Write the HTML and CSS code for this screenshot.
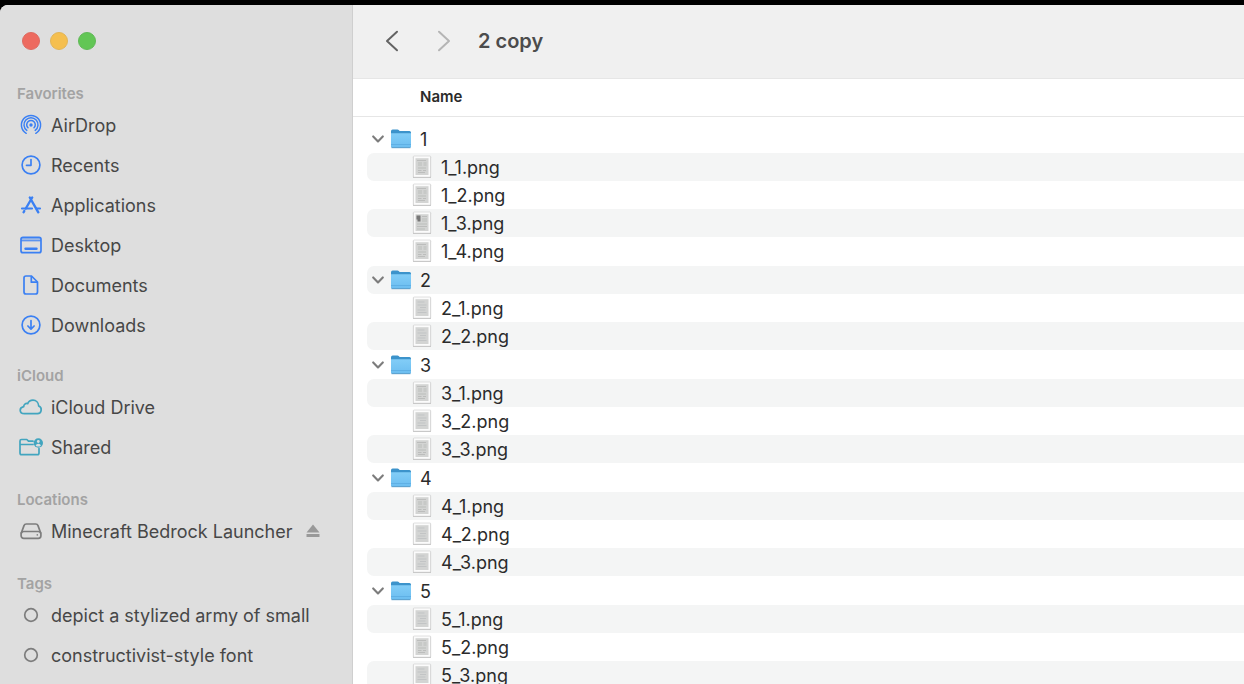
FILE: index.html
```
<!DOCTYPE html>
<html lang="en">
  <head>
    <meta charset="UTF-8" />
    <title>2 copy</title>
    <link rel="stylesheet" href="styles.css">
  </head>

  <body>
    <!-- shared icons -->
    <svg class="defs" aria-hidden="true">
      <linearGradient id="blue" x1="0" y1="0" x2="0" y2="1">
        <stop offset="0" stop-color="#82cdf7" />
        <stop offset="1" stop-color="#6bbdf0" />
      </linearGradient>
      <symbol id="chevron" viewBox="0 0 12 8">
        <path d="M1.2 1.4 6 6.4l4.8-5" fill="none" stroke="#7c7c7c" stroke-width="2.1" stroke-linecap="round" stroke-linejoin="round" />
      </symbol>
      <symbol id="folder" viewBox="0 0 22 22">
        <path d="M1 3.2Q1 1.5 2.6 1.5H7.5Q8.3 1.5 9 2.3L9.6 2.9H19.5Q21 2.9 21 4.4V12H1z" fill="#3c93cb" />
        <path d="M1 5.3H21V18.3Q21 19.8 19.5 19.8H2.5Q1 19.8 1 18.3z" fill="url(#blue)" />
        <path d="M1 16.5H21" stroke="#58a9df" stroke-width=".7" />
        <path d="M1.5 19.7H20.5" stroke="#4d94c4" stroke-width=".9" />
      </symbol>
      <symbol id="page" viewBox="0 0 20 24">
        <rect x="1" y="1.5" width="18" height="21.5" rx="1" fill="#b4b4b4" />
        <rect x="1.3" y="1" width="17.4" height="21.2" rx=".8" fill="#fbfbfb" stroke="#cdcdcd" stroke-width=".6" />
        <rect x="3.5" y="3.2" width="13" height="16.8" fill="#d3d4d3" />
      </symbol>
      <symbol id="thumb0" viewBox="0 0 20 24">
        <use href="#page" />
        <path d="M5 5.5h9M6 8h4M11.5 8h3M6 10h4M11.5 10h3M6 13h8M6 15.5h3.5M11 15.5h3M6 17.5h7" stroke="#bcbdbc" stroke-width="1.2" />
      </symbol>
      <symbol id="thumb1" viewBox="0 0 20 24">
        <use href="#page" />
        <path d="M5.5 6h7M5.5 9h9M8 11.5h6M5.5 14h8M5.5 16.5h9" stroke="#c2c4c5" stroke-width="1.2" />
      </symbol>
      <symbol id="thumb2" viewBox="0 0 20 24">
        <use href="#page" />
        <path d="M4.5 4.5h4v6h-3v-2h-1z" fill="#777" />
        <path d="M10 5.5h5M10 8h5M10 10h5M5 13h10M5 15.5h10M5 18h8" stroke="#bcbdbc" stroke-width="1.2" />
      </symbol>
    </svg>

    <div class="window">
      <aside class="sidebar">
        <div class="lights">
          <button class="red" aria-label="Close"></button>
          <button class="yellow" aria-label="Minimize"></button>
          <button class="green" aria-label="Zoom"></button>
        </div>

        <nav>
          <section>
            <h2>Favorites</h2>
            <a href="#">
              <svg class="icon" viewBox="0 0 24 24">
                <path d="M7.2 20.3A9.6 9.6 0 1 1 16.8 20.3M7.8 17.4A7 7 0 1 1 16.2 17.4M9 14.8A4.3 4.3 0 1 1 15 14.8" stroke-width="1.5" />
                <circle cx="12" cy="12" r="1.7" fill="currentColor" stroke="none" />
              </svg>
              AirDrop
            </a>
            <a href="#">
              <svg class="icon" viewBox="0 0 24 24">
                <circle cx="12" cy="12" r="8.9" />
                <path d="M12 6.5V12.3H7.5" />
              </svg>
              Recents
            </a>
            <a href="#">
              <svg class="icon" viewBox="0 0 24 24">
                <path d="M13.2 4.5 6.8 15.5M5.3 18 4.6 19.3M10.8 4.5 19.3 19.3" stroke-width="2.4" />
                <path d="M3 15.5H13M17.5 15.5H21" stroke-width="2.2" />
              </svg>
              Applications
            </a>
            <a href="#">
              <svg class="icon" viewBox="0 0 24 24">
                <path d="M2 5h20v2.8H2z" fill="currentColor" stroke="none" opacity=".4" />
                <rect x="2" y="4.3" width="20" height="15.4" rx="2" />
                <path d="M2.5 7.8h19" stroke-width="1" />
                <path d="M6.5 15.8h11" stroke-width="2.4" />
              </svg>
              Desktop
            </a>
            <a href="#">
              <svg class="icon" viewBox="0 0 24 24">
                <path d="M12.5 3H7Q5 3 5 5V19Q5 21 7 21H16.5Q18.5 21 18.5 19V9z" />
                <path d="M12.3 3.5V9.2H18" />
              </svg>
              Documents
            </a>
            <a href="#">
              <svg class="icon" viewBox="0 0 24 24">
                <circle cx="12" cy="12" r="8.9" />
                <path d="M12 7.5V16M8.9 13 12 16.1 15.1 13" />
              </svg>
              Downloads
            </a>
          </section>

          <section class="cloud">
            <h2>iCloud</h2>
            <a href="#">
              <svg class="icon" viewBox="0 0 24 24">
                <path d="M5.5 18.7H18.5A4 4 0 0 0 19.7 11C19.5 7.5 17 5.2 14 5.2C11.5 5.2 9.6 6.5 8.7 8.6C6.5 8 4.7 9.5 4.7 11.7C2.5 12.2 1.2 13.6 1.2 15.3C1.2 17.3 3 18.7 5.5 18.7z" />
              </svg>
              iCloud Drive
            </a>
            <a href="#">
              <svg class="icon" viewBox="0 0 24 24">
                <path d="M14 6.2H9.5L7.8 4.5H2.5Q1 4.5 1 6V18Q1 19.7 2.7 19.7H18.3Q20 19.7 20 18V13.5M1 9.5H14" />
                <circle cx="19.3" cy="8" r="4.7" fill="currentColor" stroke="none" />
                <circle cx="19.3" cy="6.5" r="1.4" fill="#dedede" stroke="none" />
                <path d="M16.7 10.7Q17.1 8.8 19.3 8.8T21.9 10.7Q20.8 11.6 19.3 11.6T16.7 10.7z" fill="#dedede" stroke="none" />
              </svg>
              Shared
            </a>
          </section>

          <section class="gray">
            <h2>Locations</h2>
            <a href="#">
              <svg class="icon" viewBox="0 0 24 24">
                <path d="M2.3 14 5 6.6Q5.6 5 7.3 5H16.7Q18.4 5 19 6.6L21.7 14" />
                <rect x="2.1" y="12.5" width="19.8" height="6.8" rx="2.6" />
                <circle cx="18.3" cy="15.9" r=".8" fill="currentColor" stroke="none" />
              </svg>
              Minecraft Bedrock Launcher
              <svg class="eject" viewBox="0 0 14 14">
                <path d="M7 .5 13.5 8.5H.5zM.5 10h13v3H.5z" fill="currentColor" />
              </svg>
            </a>
          </section>

          <section class="gray">
            <h2>Tags</h2>
            <a href="#">
              <svg class="icon" viewBox="0 0 24 24"><circle cx="12" cy="12" r="6.3" /></svg>
              depict a stylized army of small
            </a>
            <a href="#">
              <svg class="icon" viewBox="0 0 24 24"><circle cx="12" cy="12" r="6.3" /></svg>
              constructivist-style font
            </a>
          </section>
        </nav>
      </aside>

      <main>
        <header class="toolbar">
          <button aria-label="Back">
            <svg viewBox="0 0 14 22"><path d="M12 1.8 2 11 12 20.2" /></svg>
          </button>
          <button aria-label="Forward" disabled>
            <svg viewBox="0 0 14 22"><path d="M2 1.8 12 11 2 20.2" /></svg>
          </button>
          <h1>2 copy</h1>
        </header>

        <table class="files">
          <thead>
            <tr><th scope="col">Name</th></tr>
          </thead>
        </table>
      </main>
    </div>

    <script>
      // folder name -> number of pages in it
      const folders = [[1, 4], [2, 2], [3, 3], [4, 3], [5, 3]]
      const thumbs = [0, 0, 2, 0, 1, 1, 0, 1, 0, 0, 1, 1, 1, 0, 1]
      const table = document.querySelector('.files')
      let count = 0

      folders.forEach(([name, pages]) => {
        let str = `<tr>
                     <td>
                       <div class="row">
                         <button class="toggle" aria-label="Collapse ${name}" aria-expanded="true">
                           <svg><use href="#chevron"></use></svg>
                         </button>
                         <svg class="folder"><use href="#folder"></use></svg>
                         <span>${name}</span>
                       </div>
                     </td>
                   </tr>`

        for (let i = 1; i <= pages; i++) {
          str += `<tr>
                    <td>
                      <div class="row file">
                        <svg class="thumb"><use href="#thumb${thumbs[count]}"></use></svg>
                        <span>${name}_${i}.png</span>
                      </div>
                    </td>
                  </tr>`
          count++
        }

        const group = document.createElement('tbody')
        group.innerHTML = str
        table.appendChild(group)
      })

      // every second row is striped, across all the folders
      document.querySelectorAll('.row').forEach((row, i) => {
        if (i % 2) row.classList.add('striped')
      })
    </script>
  </body>
</html>
```
FILE: styles.css
```
* {
  box-sizing: border-box;
}

body {
  margin: 0;
  padding-top: 5px;
  height: 100vh;
  overflow: hidden;
  background-color: #000;
  font-family: Inter, "Liberation Sans", sans-serif;
}

button {
  padding: 0;
  border: none;
  background: none;
}

svg {
  display: block;
  flex: none;
}

.defs {
  position: absolute;
  width: 0;
  height: 0;
}

.window {
  display: grid;
  grid-template-columns: 353px 1fr;
  height: 100%;
  overflow: hidden;
  border-top-left-radius: 8px;
  background-color: #fff;
}

/* sidebar */
.sidebar {
  overflow: hidden;
  border-right: 1px solid #cfcfcf;
  background-color: #dedede;
}

.lights {
  display: flex;
  align-items: center;
  gap: 10px;
  height: 72px;
  padding-left: 22px;
}

.lights button {
  width: 18px;
  height: 18px;
  border-radius: 50%;
}

.lights .red {
  border: 1px solid #de6a60;
  background-color: #ed6a5f;
}

.lights .yellow {
  border: 1px solid #e2b557;
  background-color: #f5bf4f;
}

.lights .green {
  border: 1px solid #60b957;
  background-color: #62c655;
}

nav {
  display: flex;
  flex-direction: column;
  gap: 20px;
  padding-top: 6px;
}

h2 {
  margin: 0;
  padding-left: 17px;
  font-size: 15px;
  line-height: 22px;
  font-weight: 600;
  color: #a3a3a3;
}

nav a {
  display: flex;
  align-items: center;
  gap: 8px;
  height: 40px;
  padding-left: 19px;
  font-size: 18px;
  color: #474747;
  text-decoration: none;
  white-space: nowrap;
}

.gray {
  padding-top: 2px;
}

.icon {
  width: 24px;
  height: 24px;
  color: #3b80f3;
  fill: none;
  stroke: currentColor;
  stroke-width: 1.7;
  stroke-linecap: round;
  stroke-linejoin: round;
}

.cloud .icon {
  color: #42a5bf;
}

.gray .icon {
  color: #7d7d7d;
}

.eject {
  width: 14px;
  height: 14px;
  margin-left: 6px;
  color: #999;
}

/* file list */
main {
  min-width: 0;
  overflow: hidden;
}

.toolbar {
  display: flex;
  align-items: center;
  height: 74px;
  padding: 0 0 1px 32px;
  border-bottom: 1px solid #e6e6e6;
  background-color: #f0f0f0;
}

.toolbar button {
  margin-right: 38px;
}

.toolbar button:disabled {
  margin-right: 27px;
}

.toolbar svg {
  width: 14px;
  height: 22px;
  fill: none;
  stroke: #636363;
  stroke-width: 2;
  stroke-linecap: round;
  stroke-linejoin: round;
}

.toolbar button:disabled svg {
  stroke: #b5b5b5;
}

h1 {
  margin: 0;
  font-size: 20px;
  font-weight: 600;
  color: #4c4c4c;
}

.files {
  width: 100%;
  border-spacing: 0;
}

th {
  height: 38px;
  padding: 0 0 2px 67px;
  border-bottom: 1px solid #e6e6e6;
  font-size: 15px;
  font-weight: 600;
  color: #2b2b2b;
  text-align: left;
}

td {
  padding: 0;
}

thead + tbody tr:first-child td {
  padding-top: 8px;
}

tbody tr:last-child td {
  padding-bottom: 1px;
}

.row {
  display: flex;
  align-items: center;
  height: 28px;
  margin-left: 14px;
  padding-left: 5px;
  border-radius: 7px 0 0 7px;
  font-size: 18px;
  color: #2b2b2b;
}

.file {
  padding-left: 45px;
}

.striped {
  background-color: #f4f5f5;
}

.toggle,
.toggle svg {
  width: 12px;
  height: 8px;
}

.folder {
  width: 22px;
  height: 22px;
  margin: 0 8px 0 6px;
}

.thumb {
  width: 20px;
  height: 24px;
  margin-right: 9px;
}
```
